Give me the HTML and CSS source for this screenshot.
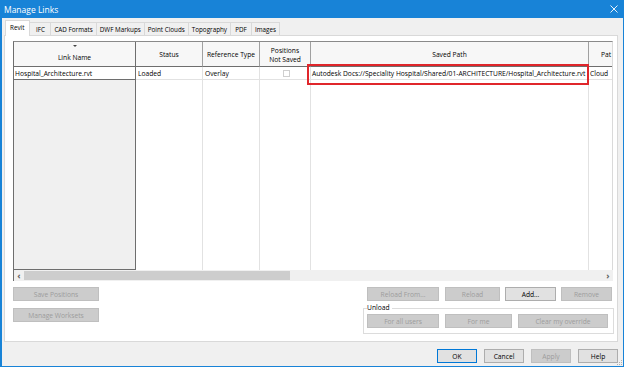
FILE: index.html
```html
<!DOCTYPE html>
<html>
<head>
<meta charset="utf-8">
<link rel="stylesheet" href="styles.css">
</head>
<body>
<div class="window">
  <div class="titlebar">
    <span class="title">Manage Links</span>
    <svg class="close" width="8" height="8" viewBox="0 0 8 8"><path d="M0.5 0.5 L7.5 7.5 M7.5 0.5 L0.5 7.5" stroke="#fff" stroke-width="0.9"/></svg>
  </div>
  <div class="main">
    <div class="tabs">
      <div class="tab active">Revit</div>
      <div class="tab">IFC</div>
      <div class="tab">CAD Formats</div>
      <div class="tab">DWF Markups</div>
      <div class="tab">Point Clouds</div>
      <div class="tab">Topography</div>
      <div class="tab">PDF</div>
      <div class="tab">Images</div>
    </div>
    <div class="panel">
      <div class="grid">
        <div class="table">
          <div class="th th-name"><span class="sort"></span><span>Link Name</span></div>
          <div class="th">Status</div>
          <div class="th">Reference Type</div>
          <div class="th">Positions<br>Not Saved</div>
          <div class="th">Saved Path</div>
          <div class="th th-clip"><span>Pat</span></div>

          <div class="td td-name">Hospital_Architecture.rvt</div>
          <div class="td">Loaded</div>
          <div class="td">Overlay</div>
          <div class="td td-check"><span class="check"></span></div>
          <div class="td td-path">Autodesk Docs://Speciality Hospital/Shared/01-ARCHITECTURE/Hospital_Architecture.rvt<span class="highlight"></span></div>
          <div class="td td-last">Cloud</div>

          <div class="fill fill-name"></div>
          <div class="fill"></div>
          <div class="fill"></div>
          <div class="fill"></div>
          <div class="fill"></div>
          <div class="fill fill-last"></div>
        </div>
        <div class="hscroll">
          <span class="arrow">&#8249;</span>
          <div class="track"><div class="thumb"></div></div>
          <span class="arrow">&#8250;</span>
        </div>
      </div>
      <div class="controls">
        <div class="left-btns">
          <button class="btn" disabled>Save Positions</button>
          <button class="btn" disabled>Manage Worksets</button>
        </div>
        <div class="right-btns">
          <div class="btn-row">
            <button class="btn w-reloadfrom" disabled>Reload From...</button>
            <button class="btn w-reload" disabled>Reload</button>
            <button class="btn w-add">Add...</button>
            <button class="btn w-remove" disabled>Remove</button>
          </div>
          <fieldset class="group">
            <legend>Unload</legend>
            <div class="btn-row group-row">
              <button class="btn w-allusers" disabled>For all users</button>
              <button class="btn w-forme" disabled>For me</button>
              <button class="btn w-clear" disabled>Clear my override</button>
            </div>
          </fieldset>
        </div>
      </div>
    </div>
  </div>
  <div class="footer">
    <button class="btn fbtn default">OK</button>
    <button class="btn fbtn">Cancel</button>
    <button class="btn fbtn" disabled>Apply</button>
    <button class="btn fbtn">Help</button>
  </div>
  <svg class="grip" width="5" height="5" viewBox="0 0 5 5"><rect x="4" y="0" width="1" height="1" fill="#b0b0b0"/><rect x="2" y="2" width="1" height="1" fill="#b0b0b0"/><rect x="4" y="2" width="1" height="1" fill="#b0b0b0"/><rect x="0" y="4" width="1" height="1" fill="#b0b0b0"/><rect x="2" y="4" width="1" height="1" fill="#b0b0b0"/><rect x="4" y="4" width="1" height="1" fill="#b0b0b0"/></svg>
</div>
</body>
</html>
```
FILE: styles.css
```css
* { box-sizing: border-box; }
html, body { margin: 0; padding: 0; }
body {
  width: 624px;
  height: 367px;
  overflow: hidden;
  font-family: "Open Sans", "Noto Sans", "Liberation Sans", sans-serif;
  font-size: 6.7px;
  color: #000;
  background: #fff;
}
.window {
  position: relative;
  width: 624px;
  height: 367px;
  border: 1px solid #1883d7;
  border-left-width: 2px;
  border-top: none;
  background: #f0f0f0;
  display: flex;
  flex-direction: column;
}
.titlebar {
  height: 18px;
  flex: none;
  background: #1883d7;
  color: #fff;
  display: flex;
  align-items: center;
  justify-content: space-between;
  padding: 0 6px 0 4px;
  margin: 0 -1px 0 -2px;
}
.title { font-size: 8.5px; }
.close { display: block; }

.main {
  flex: none;
  padding: 2px 5px 0 2px;
}
.tabs {
  display: flex;
  height: 15px;
  align-items: flex-end;
  padding-left: 1px;
  font-size: 6.3px;
}
.tab {
  height: 13px;
  min-width: 22px;
  padding: 0 3px;
  display: flex;
  align-items: center;
  justify-content: center;
  background: #f0f0f0;
  border: 1px solid #d9d9d9;
  border-bottom: none;
  margin-left: -1px;
  white-space: nowrap;
}
.tab.active {
  height: 16px;
  margin-bottom: -1px;
  background: #fff;
  position: relative;
  z-index: 1;
  padding: 0 5px 2px 4px;
  margin-left: 0;
}
.panel {
  height: 307px;
  background: #fff;
  border: 1px solid #d9d9d9;
  padding: 5px 4px 0 8px;
}

/* data grid */
.grid {
  height: 240px;
  display: flex;
  flex-direction: column;
}
.table {
  flex: 1;
  display: grid;
  grid-template-columns: 122px 67px 57px 51px 278px 1fr;
  grid-template-rows: 25px 13px 1fr;
  border-top: 1px solid #8a8a8a;
  border-left: 1px solid #6e6e6e;
  border-right: 1px solid #dadada;
  min-height: 0;
}
.th {
  background: #f7f7f7;
  border-right: 1px solid #a0a0a0;
  border-bottom: 1px solid #6e6e6e;
  display: flex;
  align-items: center;
  justify-content: center;
  text-align: center;
  line-height: 9px;
  padding-top: 1px;
}
.th-name {
  flex-direction: column;
  border-right: 1px solid #6e6e6e;
}
.sort {
  width: 0;
  height: 0;
  border-left: 2px solid transparent;
  border-right: 2px solid transparent;
  border-top: 2px solid #444;
  margin: -2px 0 6px;
}
.th-clip {
  justify-content: flex-start;
  overflow: hidden;
  white-space: nowrap;
  padding-left: 12px;
  border-right: none;
}
.td {
  border-right: 1px solid #e2e2e2;
  border-bottom: 1px solid #e2e2e2;
  display: flex;
  align-items: center;
  padding-left: 2px;
  white-space: nowrap;
}
.td-name {
  border-right: 1px solid #6e6e6e;
  border-bottom: 1px solid #6e6e6e;
  padding-left: 1px;
}
.td-check { justify-content: center; }
.check {
  width: 7px;
  height: 7px;
  border: 1px solid #cfcfcf;
  background: #fff;
}
.td-path {
  position: relative;
  padding-left: 1px;
}
.highlight {
  position: absolute;
  left: -4px;
  top: -3px;
  right: -1px;
  bottom: -6px;
  border: 2px solid #e0262b;
}
.td-last {
  border-right: none;
  padding-left: 1px;
  overflow: hidden;
}
.fill {
  border-right: 1px solid #e2e2e2;
}
.fill-name {
  background: #f0f0f0;
  border-right: 1px solid #6e6e6e;
  border-bottom: 1px solid #6e6e6e;
}
.fill-last { border-right: none; }

.hscroll {
  height: 11px;
  flex: none;
  display: flex;
  align-items: center;
  background: #f0f0f0;
  border-left: 1px solid #6e6e6e;
}
.arrow {
  width: 10px;
  text-align: center;
  font-size: 9px;
  line-height: 11px;
  font-weight: bold;
  color: #606060;
  flex: none;
}
.track {
  flex: 1;
  height: 9px;
}
.thumb {
  width: 266px;
  height: 9px;
  background: #cdcdcd;
}

/* buttons */
.btn {
  font-family: inherit;
  font-size: 6.7px;
  height: 14px;
  padding: 0;
  margin: 0;
  border: 1px solid #adadad;
  background: #e1e1e1;
  color: #000;
  white-space: nowrap;
}
.btn:disabled {
  background: #cccccc;
  border-color: #bfbfbf;
  color: #9c9c9c;
}
.controls {
  display: flex;
  justify-content: space-between;
  margin-top: 6px;
}
.left-btns {
  display: flex;
  flex-direction: column;
  gap: 7px;
  width: 86px;
}
.right-btns {
  width: 251px;
  margin-right: -1px;
  display: flex;
  flex-direction: column;
}
.btn-row {
  display: flex;
  gap: 5px;
  padding-left: 4px;
}
.w-reloadfrom { width: 72px; margin-right: 1px; }
.w-reload { width: 55px; }
.w-add { width: 51px; }
.w-remove { width: 51px; }
.group {
  margin: 0;
  margin-top: 3px;
  padding: 0 3px 5px 0;
  border: 1px solid #dcdcdc;
  height: 30px;
}
.group legend {
  padding: 0 2px 0 0;
  margin-left: 3px;
  line-height: 8px;
}
.group-row {
  padding-left: 3px;
  gap: 6px;
  margin-top: 2px;
}
.w-allusers { width: 72px; }
.w-forme { width: 67px; }
.w-clear { width: 90px; }

.footer {
  flex: 1;
  display: flex;
  justify-content: flex-end;
  gap: 7px;
  padding: 7px 5px 0 0;
}
.fbtn { width: 40px; }
.fbtn.default { border-color: #0078d7; }
.grip {
  position: absolute;
  right: 1px;
  bottom: 1px;
}
```
